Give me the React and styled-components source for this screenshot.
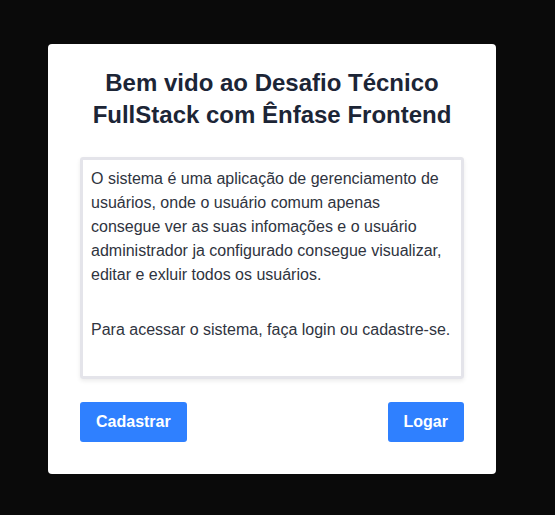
import styled, { createGlobalStyle } from 'styled-components';

const GlobalStyle = createGlobalStyle`
    body {
        margin: 0;
        background-color: #0a0a0a;
        font-family: "Liberation Sans", Arial, sans-serif;
    }
`;

const App = () => {
    return (
        <>
            <GlobalStyle />
            <Page>
                <Card>
                    <Title>Bem vido ao Desafio Técnico FullStack com Ênfase Frontend</Title>
                    <InfoBox>
                        <Paragraph>
                            O sistema é uma aplicação de gerenciamento de usuários, onde o usuário comum apenas consegue ver as suas infomações e o usuário administrador ja configurado consegue visualizar, editar e exluir todos os usuários.
                        </Paragraph>
                        <Paragraph spaced>
                            Para acessar o sistema, faça login ou cadastre-se.
                        </Paragraph>
                    </InfoBox>
                    <Actions>
                        <Button>Cadastrar</Button>
                        <Button>Logar</Button>
                    </Actions>
                </Card>
            </Page>
        </>
    );
};

const Page = styled.div`
    min-height: 100vh;
    box-sizing: border-box;
    padding: 44px 0 0 48px;
`;

const Card = styled.div`
    width: 448px;
    height: 430px;
    box-sizing: border-box;
    background-color: #ffffff;
    border-radius: 4px;
    padding: 23px 32px 32px;
    display: flex;
    flex-direction: column;
`;

const Title = styled.h1`
    margin: 0;
    font-size: 24px;
    line-height: 32px;
    font-weight: 700;
    text-align: center;
    color: #1c2536;
`;

const InfoBox = styled.div`
    margin-top: 26px;
    height: 222px;
    box-sizing: border-box;
    border: 3px solid #e4e4ea;
    border-radius: 3px;
    box-shadow: 0 2px 4px rgba(0, 0, 0, 0.08);
    padding: 7px 8px 0 8px;
`;

const Paragraph = styled.p`
    margin: ${(props) => (props.spaced ? '31px 0 0' : '0')};
    font-size: 16px;
    line-height: 24px;
    color: #2f3440;
`;

const Actions = styled.div`
    margin-top: auto;
    display: flex;
    justify-content: space-between;
`;

const Button = styled.button`
    height: 40px;
    padding: 0 16px;
    border: none;
    border-radius: 3px;
    background-color: #2f80ff;
    color: #ffffff;
    font-family: "Liberation Sans", Arial, sans-serif;
    font-size: 16px;
    font-weight: 700;
    cursor: pointer;
`;

export default App;
